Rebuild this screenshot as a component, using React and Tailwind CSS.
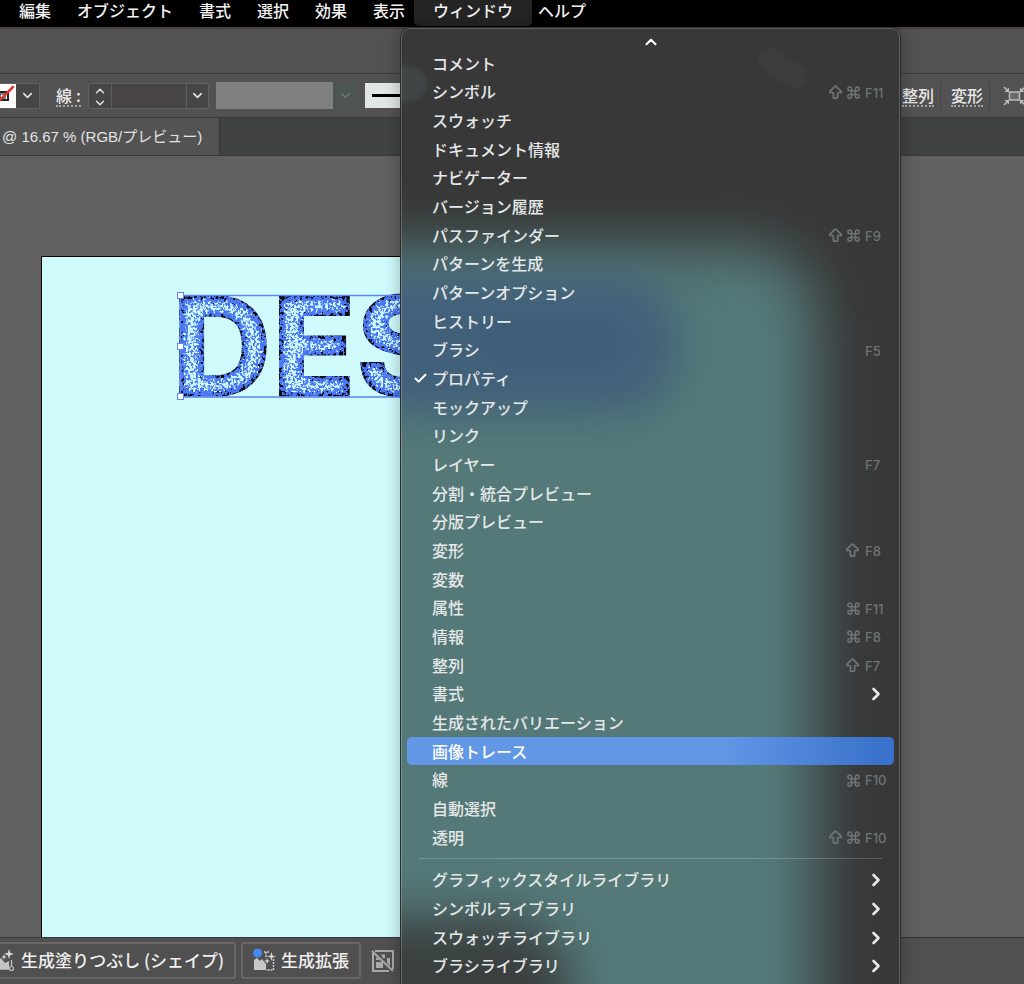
import React from "react";
import { ChevronDown, ChevronUp, ChevronRight, Check, Command, ArrowBigUp } from "lucide-react";

const menusBefore = ["編集", "オブジェクト", "書式", "選択", "効果", "表示"];

const panels = [
  { label: "コメント" },
  { label: "シンボル", shift: true, cmd: true, keyName: "F11" },
  { label: "スウォッチ" },
  { label: "ドキュメント情報" },
  { label: "ナビゲーター" },
  { label: "バージョン履歴" },
  { label: "パスファインダー", shift: true, cmd: true, keyName: "F9" },
  { label: "パターンを生成" },
  { label: "パターンオプション" },
  { label: "ヒストリー" },
  { label: "ブラシ", keyName: "F5" },
  { label: "プロパティ", checked: true },
  { label: "モックアップ" },
  { label: "リンク" },
  { label: "レイヤー", keyName: "F7" },
  { label: "分割・統合プレビュー" },
  { label: "分版プレビュー" },
  { label: "変形", shift: true, keyName: "F8" },
  { label: "変数" },
  { label: "属性", cmd: true, keyName: "F11" },
  { label: "情報", cmd: true, keyName: "F8" },
  { label: "整列", shift: true, keyName: "F7" },
  { label: "書式", submenu: true },
  { label: "生成されたバリエーション" },
  { label: "画像トレース", active: true },
  { label: "線", cmd: true, keyName: "F10" },
  { label: "自動選択" },
  { label: "透明", shift: true, cmd: true, keyName: "F10" },
];

const libraries = [
  { label: "グラフィックスタイルライブラリ", submenu: true },
  { label: "シンボルライブラリ", submenu: true },
  { label: "スウォッチライブラリ", submenu: true },
  { label: "ブラシライブラリ", submenu: true },
];

function MenuRow({ item }) {
  const tone = item.active
    ? "bg-linear-to-r from-[#6297e6] from-65% to-[#3a72cb] to-97% text-white"
    : "text-[#e4e8e8]";
  return (
    <button
      type="button"
      role="menuitem"
      className={`flex min-h-[28px] w-full flex-1 items-center rounded-[5px] text-left ${tone}`}
    >
      <span className="flex w-[25px] shrink-0 items-center pl-[6px]">
        {item.checked && <Check size={15} strokeWidth={3.2} className="text-white" />}
      </span>
      <span className="flex-1 pb-px leading-6 font-medium whitespace-nowrap">{item.label}</span>
      <span className="flex items-center gap-[2px] pt-px text-[#6f7474]">
        {item.shift && <ArrowBigUp size={17} strokeWidth={2.4} />}
        {item.cmd && <Command size={15} strokeWidth={2.4} />}
      </span>
      <span className="ml-[4px] flex w-[29px] shrink-0 items-center pt-[3px] font-[Inter] text-[13px] font-medium text-[#6f7474]">
        {item.keyName}
        {item.submenu && (
          <ChevronRight size={20} strokeWidth={3.2} className="-mt-[2px] ml-px text-[#e6e8e8]" />
        )}
      </span>
    </button>
  );
}

function MenuBackdrop() {
  return (
    <div aria-hidden="true" className="pointer-events-none absolute inset-0 overflow-hidden rounded-t-[9px]">
      <div className="absolute top-[38px] -left-[30px] h-[36px] w-[56px] rounded-full bg-[#3f4645] blur-[2px]" />
      <div className="absolute top-[28px] left-[354px] h-[24px] w-[54px] rotate-35 rounded-full bg-[#3c3c3c] blur-[1px]" />
      <div className="absolute top-[218px] right-[84px] -bottom-[120px] -left-[120px] rounded-[70px] bg-[#557979] blur-[28px]" />
      <div className="absolute top-[246px] -left-[60px] h-[140px] w-[336px] rounded-[60px] bg-[#42607a] blur-[22px]" />
      <div className="absolute top-[296px] left-[86px] h-[40px] w-[124px] rounded-full bg-[#3f5c79] blur-[6px]" />
      <div className="absolute -bottom-[80px] -left-[110px] h-[146px] w-[280px] rounded-[70px] bg-[#3b3f3f] blur-[24px]" />
    </div>
  );
}

function WindowMenu() {
  return (
    <div
      role="menu"
      aria-label="ウィンドウ"
      className="absolute top-[28px] bottom-0 left-[401px] flex w-[499px] flex-col rounded-t-[9px] bg-[#383838] px-[6px] pb-[4px] shadow-[0_0_16px_2px_rgba(0,0,0,0.25)] ring-1 ring-[#2c2c2c]"
    >
      <MenuBackdrop />
      <div className="pointer-events-none absolute inset-0 rounded-t-[9px] border border-b-0 border-white/20" />
      <div className="relative flex min-h-0 flex-1 flex-col">
        <button type="button" aria-label="上へスクロール" className="flex h-[21px] shrink-0 items-end justify-center text-white">
          <ChevronUp size={18} strokeWidth={2.8} className="-mb-[2px]" />
        </button>
        {panels.map((item) => (
          <MenuRow key={item.label} item={item} />
        ))}
        <div role="separator" className="flex h-[14px] shrink-0 items-center px-[12px]">
          <div className="h-px w-full bg-white/20" />
        </div>
        {libraries.map((item) => (
          <MenuRow key={item.label} item={item} />
        ))}
      </div>
    </div>
  );
}

function MenuBar() {
  return (
    <nav className="flex h-[27px] shrink-0 items-start bg-black pl-[19px] font-medium whitespace-nowrap text-[#f2f2f2]">
      <div className="flex gap-[26px]">
        {menusBefore.map((m) => (
          <button key={m} type="button" className="leading-5">
            {m}
          </button>
        ))}
      </div>
      <button type="button" aria-haspopup="menu" className="ml-[9px] h-[26px] w-[118px] rounded-b-[5px] bg-[#242424] pb-[6px] leading-5">
        ウィンドウ
      </button>
      <button type="button" className="ml-[6px] leading-5">
        ヘルプ
      </button>
    </nav>
  );
}

function ControlBar() {
  return (
    <div className="flex h-[44px] shrink-0 items-center overflow-hidden border-t border-[#3d3d3d] bg-[#525252] text-[#e8e8e8]">
      <button type="button" aria-label="塗り" className="flex h-[26px] w-[40px] shrink-0 rounded-r-[2px] border border-l-0 border-[#616363] bg-[#464646]">
        <svg width="16" height="24" viewBox="0 0 16 24" className="bg-white">
          <rect x="-4" y="8" width="12" height="8" fill="none" stroke="#222" strokeWidth="2" />
          <rect x="0" y="10" width="5" height="4" fill="none" stroke="#555" strokeWidth="1.500" />
          <path d="M-3 19 L13 3" stroke="#e0352b" strokeWidth="2.500" strokeLinecap="round" />
        </svg>
        <span className="flex h-full flex-1 items-center justify-center">
          <ChevronDown size={15} strokeWidth={2.4} />
        </span>
      </button>
      <label htmlFor="stroke-width" className="ml-[16px] flex h-[22px] shrink-0 items-center border-b-2 border-dotted border-[#a8a8a8] font-medium">
        線<span className="pl-[4px]">:</span>
      </label>
      <div className="ml-[7px] flex h-[26px] w-[121px] shrink-0 rounded-[3px] border border-[#616363] bg-[#464646]">
        <div className="flex w-[23px] flex-col items-center justify-between border-r border-[#5e5e5e]">
          <button type="button" aria-label="増やす" className="h-[12px]">
            <ChevronUp size={14} strokeWidth={2.4} />
          </button>
          <button type="button" aria-label="減らす" className="h-[13px]">
            <ChevronDown size={14} strokeWidth={2.4} />
          </button>
        </div>
        <input id="stroke-width" type="text" className="w-[74px] bg-[#474445] px-1 text-sm outline-none" />
        <button type="button" aria-label="線幅" className="flex flex-1 items-center justify-center border-l border-[#5e5e5e]">
          <ChevronDown size={15} strokeWidth={2.4} />
        </button>
      </div>
      <button type="button" aria-label="可変線幅" className="ml-[7px] flex h-[27px] w-[142px] shrink-0 bg-[#4d5454]">
        <span className="h-full w-[117px] bg-[#808080]" />
        <span className="flex h-full flex-1 items-center justify-center text-[#6e7474]">
          <ChevronDown size={15} strokeWidth={2.4} />
        </span>
      </button>
      <button type="button" aria-label="ブラシ定義" className="ml-[7px] flex h-[25px] w-[120px] shrink-0 items-center bg-[#e3e6e6] pl-[7px]">
        <span className="h-[3px] w-full bg-black" />
      </button>
      <div className="ml-auto flex h-full shrink-0 items-center font-medium">
        <button type="button" className="h-[22px] border-b-2 border-dotted border-[#a8a8a8] leading-5">
          整列
        </button>
        <span className="ml-[6px] h-[30px] w-px bg-[#464646]" />
        <button type="button" className="ml-[10px] h-[22px] border-b-2 border-dotted border-[#a8a8a8] leading-5">
          変形
        </button>
        <span className="ml-[6px] h-[30px] w-px bg-[#464646]" />
        <button type="button" aria-label="選択オブジェクトを編集モードにする" className="ml-[13px] w-[21px] overflow-hidden">
          <svg width="26" height="20" viewBox="0 0 26 20" fill="none" stroke="#bdbdbd">
            <rect x="6.500" y="6" width="10" height="8" strokeWidth="1.500" fill="#6a6a6a" />
            <path d="M1 1 L5 5 M1 19 L5 15 M22 1 L18 5 M22 19 L18 15" strokeWidth="1.500" />
            <path d="M6 1.500 V6 H1.500 Z M6 18.500 V14 H1.500 Z M17 1.500 V6 H21.500 Z M17 18.500 V14 H21.500 Z" fill="#bdbdbd" stroke="none" />
          </svg>
        </button>
      </div>
    </div>
  );
}

function SpeckledLettering() {
  return (
    <svg width="320" height="112" viewBox="0 0 320 112" className="absolute top-[34px] left-[134px]">
      <defs>
        <filter id="speckle" x="0" y="0" width="320" height="112" filterUnits="userSpaceOnUse" colorInterpolationFilters="sRGB">
          <feGaussianBlur in="SourceAlpha" stdDeviation="6" result="depth" />
          <feTurbulence type="fractalNoise" baseFrequency="0.4" numOctaves="2" seed="4" />
          <feColorMatrix values="0 0 0 0 0  0 0 0 0 0  0 0 0 0 0  0 0 0 1 0" result="grainA" />
          <feTurbulence type="fractalNoise" baseFrequency="0.33" numOctaves="2" seed="11" />
          <feColorMatrix values="0 0 0 0 0  0 0 0 0 0  0 0 0 0 0  0 0 0 1 0" result="grainB" />
          <feComposite in="grainA" in2="depth" operator="arithmetic" k1="0" k2="0.5" k3="0.5" k4="0" />
          <feComponentTransfer result="lightMask">
            <feFuncA type="linear" slope="14" intercept="-9.5" />
          </feComponentTransfer>
          <feComposite in="grainB" in2="depth" operator="arithmetic" k1="0" k2="0.6" k3="-0.5" k4="0.5" />
          <feComponentTransfer result="darkMask">
            <feFuncA type="linear" slope="18" intercept="-9" />
          </feComponentTransfer>
          <feFlood floodColor="#4a78f2" result="base" />
          <feFlood floodColor="#cffbfc" />
          <feComposite in2="lightMask" operator="in" result="light" />
          <feFlood floodColor="#05060f" />
          <feComposite in2="darkMask" operator="in" result="dark" />
          <feMerge result="all">
            <feMergeNode in="base" />
            <feMergeNode in="light" />
            <feMergeNode in="dark" />
          </feMerge>
          <feComposite in="all" in2="SourceAlpha" operator="in" />
        </filter>
      </defs>
      <text x="-4" y="105" filter="url(#speckle)" fontFamily="Inter, Arial, sans-serif" fontWeight="800" fontSize="138" stroke="#000" strokeWidth="1">
        DES
      </text>
      <path d="M320 4.500 H4.500 V106 H320" fill="none" stroke="#5b84f5" strokeWidth="1.500" />
      <g fill="#fff" stroke="#5b84f5" strokeWidth="1">
        <rect x="1.500" y="1.500" width="6" height="6" />
        <rect x="1.500" y="52.500" width="6" height="6" />
        <rect x="1.500" y="102.500" width="6" height="6" />
      </g>
    </svg>
  );
}

function GenerativeFillIcon() {
  return (
    <svg width="22" height="22" viewBox="0 0 22 22" className="shrink-0">
      <path d="M1 20 V10 L5 13 L9 9 L13 14 L17 12 V20 Z" fill="#c4c4c4" />
      <path d="M17 0 L18.200 3.800 L22 5 L18.200 6.200 L17 10 L15.800 6.200 L12 5 L15.800 3.800 Z" fill="#d6d6d6" />
      <path d="M12 5 L12.700 7.300 L15 8 L12.700 8.700 L12 11 L11.300 8.700 L9 8 L11.300 7.300 Z" fill="#d6d6d6" />
      <path d="M19.500 11 V18 M6 20 H17" stroke="#c4c4c4" strokeWidth="1.300" />
      <circle cx="19.500" cy="19.500" r="2" fill="#505050" stroke="#c4c4c4" strokeWidth="1.200" />
      <circle cx="4" cy="5" r="4" fill="#4489ee" />
    </svg>
  );
}

function GenerativeExpandIcon() {
  return (
    <svg width="23" height="24" viewBox="0 0 23 24" className="shrink-0">
      <path d="M1 22 V12 L4 10 L7 13 L9 11 L13 16 V22 Z" fill="#c8c8c8" />
      <path d="M11 4 H16 M13 4 V10 M20.500 11 V22 H13" fill="none" stroke="#c8c8c8" strokeWidth="1.500" strokeDasharray="2 1" />
      <path d="M18.500 4 L19.500 7.500 L23 8.500 L19.500 9.500 L18.500 13 L17.500 9.500 L14 8.500 L17.500 7.500 Z" fill="#d6d6d6" />
      <path d="M14 10 L14.800 12.200 L17 13 L14.800 13.800 L14 16 L13.200 13.800 L11 13 L13.200 12.200 Z" fill="#d6d6d6" />
      <circle cx="4.500" cy="5" r="4.500" fill="#4489ee" />
    </svg>
  );
}

function TaskBar() {
  return (
    <div className="flex h-[47px] shrink-0 items-start overflow-hidden border-t border-[#363636] bg-[#505050] pt-[4px] text-[17px] font-medium whitespace-nowrap text-[#f0f0f0]">
      <button type="button" className="-ml-[20px] flex h-[37px] w-[256px] shrink-0 items-center gap-[7px] rounded-[3px] border-2 border-[#676767] pb-px pl-[10px]">
        <GenerativeFillIcon />
        生成塗りつぶし (シェイプ)
      </button>
      <button type="button" className="ml-[5px] flex h-[37px] w-[120px] shrink-0 items-center gap-[5px] rounded-[3px] border-2 border-[#676767] pb-px pl-[10px]">
        <GenerativeExpandIcon />
        生成拡張
      </button>
      <button type="button" aria-label="モックアップ" className="ml-[10px] flex h-[37px] shrink-0 items-center">
        <svg width="24" height="24" viewBox="0 0 24 24" fill="none" stroke="#a9a9a9">
          <path d="M4 2 H22 V20 M18 22 H2 V4" strokeWidth="2" />
          <path d="M1 2 L22 22" strokeWidth="2" />
          <path d="M10 5.500 H14 V9 L12 9.500 Z M5 8 L9 11 H5 Z M5 13 H12 V19 H5 Z M16 9 H19 V17 L16 14 Z" fill="#a9a9a9" stroke="none" />
        </svg>
      </button>
    </div>
  );
}

export default function App() {
  return (
    <div className="relative flex min-h-screen flex-col overflow-hidden bg-[#606060] font-['Noto_Sans_CJK_JP',sans-serif] text-[16px]">
      <MenuBar />
      <div className="h-[46px] shrink-0 border-t-2 border-[#4a4143] bg-[#525252]" />
      <ControlBar />
      <div className="flex h-[39px] shrink-0 border-y border-[#393939] bg-[#404342]">
        <button type="button" className="w-[220px] border-r border-[#353535] bg-[#535353] pl-[2px] text-left text-[15px] whitespace-nowrap text-[#e3e3e3]">
          <span className="font-['Liberation_Sans','Noto_Sans_CJK_JP',sans-serif]">@ 16.67 % (RGB/プレビュー)</span>
        </button>
      </div>
      <main className="flex flex-1 flex-col pt-[100px]">
        <div className="relative mr-[200px] ml-[41px] flex-1 overflow-hidden border-t border-l border-black bg-[#cffbfc]">
          <SpeckledLettering />
        </div>
      </main>
      <TaskBar />
      <WindowMenu />
    </div>
  );
}
